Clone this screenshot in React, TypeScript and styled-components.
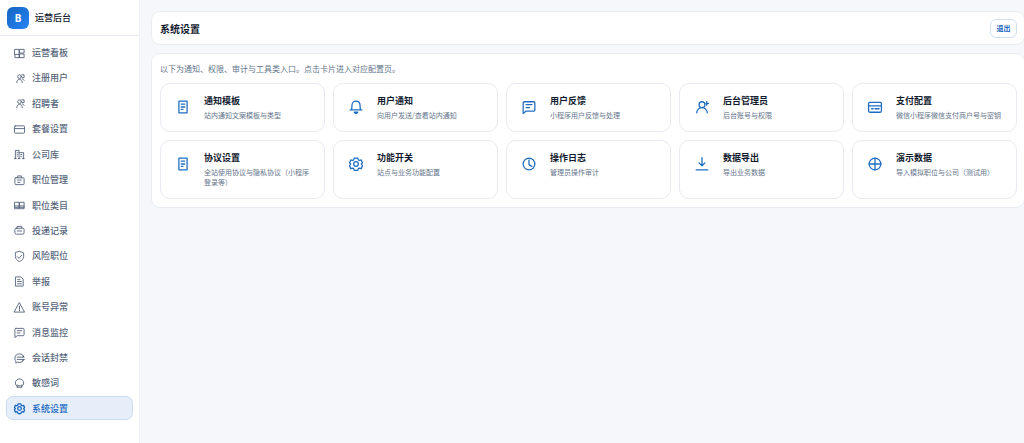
import React from "react";
import styled, { createGlobalStyle } from "styled-components";

const GlobalStyle = createGlobalStyle`
  *, *::before, *::after { box-sizing: border-box; }
  body {
    margin: 0;
    background: #f5f7fb;
    color: #111a2e;
    font-family: "Noto Sans CJK SC", sans-serif;
    font-size: 9px;
  }
  h1, h2, p, ul { margin: 0; padding: 0; }
  ul { list-style: none; }
`;

const Shell = styled.div`
  display: flex;
  min-height: 100vh;
  overflow-x: hidden;
`;

const Sidebar = styled.aside`
  flex: 0 0 140px;
  display: flex;
  flex-direction: column;
  min-height: 100vh;
  background: #fff;
  border-right: 1px solid #eef2f8;
`;

const Brand = styled.div`
  display: flex;
  align-items: center;
  gap: 6px;
  height: 36px;
  padding: 0 7px;
  border-bottom: 1px solid #e5e9ef;
  font-weight: 500;
  line-height: 12px;
`;

const Logo = styled.span`
  display: grid;
  place-items: center;
  width: 22px;
  height: 22px;
  border-radius: 6px;
  background: linear-gradient(135deg, #1565c0, #2684f5);
  color: #fff;
  font: 700 10px/12px "Noto Sans", sans-serif;
`;

const Nav = styled.nav`
  flex: 1;
  display: flex;
  padding: 4px 6px 23px;
`;

const NavList = styled.ul`
  flex: 1;
  display: flex;
  flex-direction: column;
  justify-content: space-between;
`;

const NavLink = styled.a<{ $active?: boolean }>`
  display: flex;
  align-items: center;
  gap: 7px;
  height: 24px;
  padding: 2px 7px 0;
  border: 1px solid ${(p) => (p.$active ? "#c9dbf0" : "transparent")};
  border-radius: 7px;
  background: ${(p) => (p.$active ? "#e6eef9" : "transparent")};
  color: ${(p) => (p.$active ? "#1565c0" : "#56657c")};
  font-weight: 500;
  line-height: 12px;
  text-decoration: none;
  svg { stroke-width: ${(p) => (p.$active ? 2.8 : 2)}; }
`;

const Main = styled.main`
  flex: 1;
  min-width: 0;
  display: flex;
  flex-direction: column;
  gap: 8px;
  margin-right: -1px;
  padding: 11px 0 11px 11px;
`;

const Panel = styled.section`
  padding: 9px 7px 8px 8px;
  border: 1px solid #e9edf3;
  border-radius: 9px;
  background: #fff;
`;

const TitleBar = styled(Panel).attrs({ as: "header" })`
  display: flex;
  align-items: center;
  justify-content: space-between;
  padding: 7px 7px 6px 8px;
`;

const PageTitle = styled.h1`
  font-size: 10px;
  line-height: 14px;
  font-weight: 700;
`;

const LogoutButton = styled.button`
  height: 19px;
  padding: 0 5px 1px;
  min-width: 27px;
  border: 1px solid #d0dff2;
  border-radius: 6px;
  background: #fff;
  color: #1565c0;
  font: 700 7px/10px "Noto Sans CJK SC", sans-serif;
  cursor: pointer;
`;

const Intro = styled.p`
  margin-bottom: 9px;
  color: #64748b;
  font-size: 8px;
  line-height: 11px;
`;

const CardGrid = styled.div`
  display: grid;
  grid-template-columns: repeat(5, minmax(0, 1fr));
  gap: 8px;
`;

const Card = styled.a`
  display: flex;
  align-items: flex-start;
  gap: 8px;
  padding: 10px 9px 11px;
  border: 1px solid #e7eaf0;
  border-radius: 10px;
  background: #fff;
  color: inherit;
  text-decoration: none;
`;

const CardIcon = styled.span`
  flex: 0 0 26px;
  display: grid;
  place-items: center;
  height: 26px;
  color: #1f6dc2;
  svg { stroke-width: 2.2; }
`;

const CardText = styled.div`
  flex: 1;
  min-width: 0;
`;

const CardTitle = styled.h2`
  margin-bottom: 2px;
  font-size: 9px;
  line-height: 14px;
  font-weight: 700;
`;

const CardNote = styled.p`
  color: #64748b;
  font-size: 7px;
  line-height: 10px;
`;

const glyphs = {
  dashboard: <path d="M2 3h9v11H2zM2 14v7h9v-7M13 3h9v8h-9zM13 13h9v8h-9zM11 21h2" />,
  users: (
    <>
      <circle cx="12" cy="8" r="4" />
      <path d="M6 21c0-4 2-7 6-7s6 3 6 7M17 4h5v6h-4M18 13c2 0 3 1 4 3" />
    </>
  ),
  card: (
    <>
      <rect x="1" y="4" width="22" height="16" rx="2" />
      <path d="M1 10h22" />
    </>
  ),
  building: <path d="M3 21V3h8v18M11 8h10v13M1 21h4M9 21h4M18 21h4M7 7v1M7 11v1M7 15v1M15 12h2M15 16h2" />,
  badge: (
    <>
      <rect x="2" y="6" width="20" height="15" rx="2" />
      <path d="M8 6V2h8v4M8 11h8M8 16h5" />
    </>
  ),
  category: <path d="M2 5h9v14H2zM13 5h9v14h-9zM2 13h9M13 13h9M2 16h9M13 16h9" />,
  briefcase: (
    <>
      <rect x="2" y="7" width="20" height="13" rx="3" />
      <path d="M7 7V3h10v4M7 13h10" />
    </>
  ),
  shield: <path d="M12 1l9 3v8c0 5-4 9-9 11-5-2-9-6-9-11V4zM7 12l4 4 6-7" />,
  report: <path d="M4 2h11l5 5v15H4zM8 8h5M8 12h8M8 17h8" />,
  warning: <path d="M12 2l11 20H1zM12 9v7M12 18v1" />,
  message: <path d="M4 3h16c1 0 2 1 2 2v12c0 1-1 2-2 2H7l-5 4V5c0-1 1-2 2-2zM7 8h10M7 13h6" />,
  chatBlock: <path d="M21 8c-1-4-4-6-9-6C6 2 2 5 2 11c0 4 1 6 2 7v4l4-2c7 2 12-1 13-5M7 9h14M7 14h15M18 6l4 3M22 14l-4 4" />,
  sensitive: (
    <>
      <path d="M7 18c-3-2-4-4-4-7 0-5 4-9 9-9s9 4 9 9c0 3-1 5-4 7" />
      <path d="M7 20v-5M17 20v-5M7 20h10M9 17h6" />
    </>
  ),
  gear: (
    <>
      <path d="M9 2h6l1 3 2 1 3-1 2 5-2 2 2 3-2 5-3-1-2 1-1 3H9l-1-3-2-1-3 1-2-5 2-3-2-2 2-5 3 1 2-1z" />
      <circle cx="12" cy="12" r="4" />
    </>
  ),
  document: <path d="M5 2h14v20H5zM9 7h6M9 12h6M9 16h3" />,
  bell: (
    <>
      <path d="M2 17h20M4 17c1-1 1-3 1-7 0-5 3-8 7-8s7 3 7 8c0 4 0 6 1 7" />
      <path d="M9 21h6l-2 2h-2z" fill="currentColor" />
    </>
  ),
  admin: (
    <>
      <circle cx="12" cy="8" r="5" />
      <path d="M3 22c0-5 4-9 9-9s9 4 9 9M20 3v6M19 6h4" />
    </>
  ),
  clock: (
    <>
      <circle cx="12" cy="12" r="10" />
      <path d="M12 5v8l5 3" />
    </>
  ),
  download: <path d="M12 1v14M7 10l5 5 5-5M2 22h20" />,
  pay: (
    <>
      <rect x="1" y="4" width="22" height="17" rx="2" />
      <path d="M1 10h22M6 15h3M12 15h7" />
    </>
  ),
  globe: (
    <>
      <circle cx="12" cy="12" r="10" />
      <path d="M12 2v20M2 12h20" />
    </>
  ),
};

type GlyphName = keyof typeof glyphs;

function Glyph({ name, size }: { name: GlyphName; size: number }) {
  return (
    <svg
      width={size}
      height={size}
      viewBox="0 0 24 24"
      fill="none"
      stroke="currentColor"
      strokeLinecap="round"
      strokeLinejoin="round"
      overflow="visible"
      aria-hidden="true"
    >
      {glyphs[name]}
    </svg>
  );
}

const navItems: { label: string; icon: GlyphName; active?: boolean }[] = [
  { label: "运营看板", icon: "dashboard" },
  { label: "注册用户", icon: "users" },
  { label: "招聘者", icon: "users" },
  { label: "套餐设置", icon: "card" },
  { label: "公司库", icon: "building" },
  { label: "职位管理", icon: "badge" },
  { label: "职位类目", icon: "category" },
  { label: "投递记录", icon: "briefcase" },
  { label: "风险职位", icon: "shield" },
  { label: "举报", icon: "report" },
  { label: "账号异常", icon: "warning" },
  { label: "消息监控", icon: "message" },
  { label: "会话封禁", icon: "chatBlock" },
  { label: "敏感词", icon: "sensitive" },
  { label: "系统设置", icon: "gear", active: true },
];

const cards: { title: string; note: string; icon: GlyphName }[] = [
  { title: "通知模板", note: "站内通知文案模板与类型", icon: "document" },
  { title: "用户通知", note: "向用户发送/查看站内通知", icon: "bell" },
  { title: "用户反馈", note: "小程序用户反馈与处理", icon: "message" },
  { title: "后台管理员", note: "后台账号与权限", icon: "admin" },
  { title: "支付配置", note: "微信小程序微信支付商户号与密钥", icon: "pay" },
  { title: "协议设置", note: "全站使用协议与隐私协议（小程序登录等）", icon: "document" },
  { title: "功能开关", note: "站点与业务功能配置", icon: "gear" },
  { title: "操作日志", note: "管理员操作审计", icon: "clock" },
  { title: "数据导出", note: "导出业务数据", icon: "download" },
  { title: "演示数据", note: "导入模拟职位与公司（测试用）", icon: "globe" },
];

export default function App() {
  return (
    <Shell lang="zh-CN">
      <GlobalStyle />
      <Sidebar>
        <Brand>
          <Logo>B</Logo>
          <span>运营后台</span>
        </Brand>
        <Nav>
          <NavList>
            {navItems.map((item) => (
              <li key={item.label}>
                <NavLink href="#" $active={item.active} aria-current={item.active ? "page" : undefined}>
                  <Glyph name={item.icon} size={11} />
                  <span>{item.label}</span>
                </NavLink>
              </li>
            ))}
          </NavList>
        </Nav>
      </Sidebar>
      <Main>
        <TitleBar>
          <PageTitle>系统设置</PageTitle>
          <LogoutButton type="button">退出</LogoutButton>
        </TitleBar>
        <Panel>
          <Intro>以下为通知、权限、审计与工具类入口。点击卡片进入对应配置页。</Intro>
          <CardGrid>
            {cards.map((card) => (
              <Card href="#" key={card.title}>
                <CardIcon>
                  <Glyph name={card.icon} size={14} />
                </CardIcon>
                <CardText>
                  <CardTitle>{card.title}</CardTitle>
                  <CardNote>{card.note}</CardNote>
                </CardText>
              </Card>
            ))}
          </CardGrid>
        </Panel>
      </Main>
    </Shell>
  );
}
